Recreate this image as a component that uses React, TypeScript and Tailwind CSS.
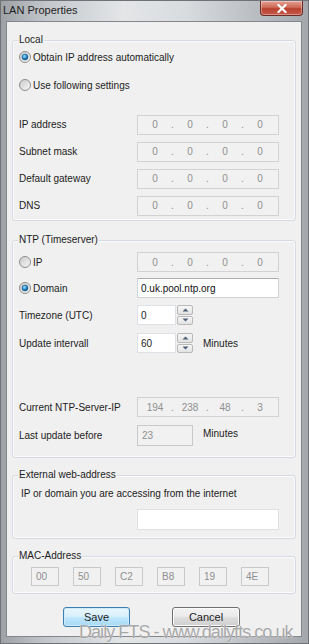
import React, { Fragment } from "react";

function Radio({ checked }: { checked?: boolean }) {
  return (
    <svg width="12" height="12" viewBox="0 0 12 12" className="shrink-0">
      <defs>
        <linearGradient id="rbg" x1="0" y1="0" x2="1" y2="1">
          <stop offset="0" stopColor="#c9c9c9" />
          <stop offset="1" stopColor="#f8f8f8" />
        </linearGradient>
        <radialGradient id="rdot" cx="0.4" cy="0.35" r="0.7">
          <stop offset="0" stopColor="#a6e4fa" />
          <stop offset="0.5" stopColor="#2b8fd0" />
          <stop offset="1" stopColor="#0c4b82" />
        </radialGradient>
      </defs>
      <circle cx="6" cy="6" r="5.5" fill="url(#rbg)" stroke="#8d8d8d" />
      {checked && <circle cx="6" cy="6" r="3" fill="url(#rdot)" stroke="#1b5686" strokeWidth="0.6" />}
    </svg>
  );
}

function IpBox({ parts }: { parts: string[] }) {
  return (
    <div className="w-[142px] h-[20px] border border-[#d2d2d2] bg-[#f1f1f1] flex items-center text-[#8f8f8f] pl-[2px]">
      {parts.map((p, i) => (
        <Fragment key={i}>
          <span className="w-[30px] text-center">{p}</span>
          {i < 3 && <span className="w-[5px] text-center">.</span>}
        </Fragment>
      ))}
    </div>
  );
}

function Group({ title, children, className }: { title: string; children: React.ReactNode; className?: string }) {
  return (
    <div className={"border border-[#d5dbe0] rounded-[3px] shadow-[inset_0_0_0_1px_#fbfbfb] " + (className ?? "")}>
      <div className="-mt-[7px] ml-[5px] px-[1px] w-fit bg-[#f0f0f0] h-[12px] leading-[12px]">{title}</div>
      {children}
    </div>
  );
}

function Spinner() {
  return (
    <div className="flex flex-col gap-[1px] ml-[1px]">
      {[0, 1].map((i) => (
        <div
          key={i}
          className="w-[16px] h-[9.5px] border border-[#b9b9b9] rounded-[2px] bg-[linear-gradient(#f7f7f7,#e2e2e2)] flex items-center justify-center"
        >
          <svg width="7" height="4" viewBox="0 0 7 4">
            {i === 0 ? <path d="M0.5 3.5 L3.5 0.5 L6.5 3.5 Z" fill="#4a5e78" /> : <path d="M0.5 0.5 L3.5 3.5 L6.5 0.5 Z" fill="#4a5e78" />}
          </svg>
        </div>
      ))}
    </div>
  );
}

export default function App() {
  return (
    <div className="relative w-[309px] h-[644px] overflow-hidden font-['Liberation_Sans',Arial,sans-serif] text-[10px] text-[#1c1c1c] bg-[linear-gradient(90deg,#9ea2a7_0%,#c4c8cc_15%,#e3e5e7_40%,#d9dcdf_60%,#b7bbbf_85%,#a4a8ac_100%)] border border-[#6f7378]">
      {/* title bar */}
      <div className="h-[20px] flex items-start justify-between">
        <div className="pl-[2px] pt-[3px] text-[11px] leading-[13px] text-[#1e1e1e]">LAN Properties</div>
        <div className="mr-[5px] w-[43px] h-[15px] rounded-b-[4px] border border-t-0 border-[#6e2a24] bg-[linear-gradient(#e4a294,#cf6a58_45%,#b8412f_55%,#c7594a)] flex items-center justify-center shadow-[inset_0_0_0_1px_rgba(255,255,255,0.35)]">
          <svg width="10" height="9" viewBox="0 0 10 9">
            <path d="M1.5 1 L8.5 8 M8.5 1 L1.5 8" stroke="#ffffff" strokeWidth="2.2" strokeLinecap="square" />
          </svg>
        </div>
      </div>

      {/* client area */}
      <div className="ml-[5px] w-[296px] h-[616px] border border-[#83878c] bg-[#f0f0f0] px-[5px] pt-[18px]">
        {/* Local */}
        <Group title="Local" className="pb-[4px]">
          <div className="mt-[3px] h-[16px] flex items-center gap-[2px] pl-[6px]">
            <Radio checked />
            <span>Obtain IP address automatically</span>
          </div>
          <div className="mt-[12px] h-[16px] flex items-center gap-[2px] pl-[6px]">
            <Radio />
            <span>Use following settings</span>
          </div>
          {[
            ["IP address", "mt-[21px]"],
            ["Subnet mask", "mt-[6px]"],
            ["Default gateway", "mt-[6px]"],
            ["DNS", "mt-[6px]"],
          ].map(([l, m]) => (
            <div key={l} className={"h-[21px] flex items-center pl-[6px] " + m}>
              <div className="w-[118px] shrink-0">{l}</div>
              <IpBox parts={["0", "0", "0", "0"]} />
            </div>
          ))}
        </Group>

        {/* NTP */}
        <Group title="NTP (Timeserver)" className="mt-[19px] pb-[11px]">
          <div className="mt-[6px] h-[20px] flex items-center pl-[6px]">
            <div className="w-[118px] shrink-0 flex items-center gap-[2px]">
              <Radio />
              <span>IP</span>
            </div>
            <IpBox parts={["0", "0", "0", "0"]} />
          </div>
          <div className="mt-[6px] h-[20px] flex items-center pl-[6px]">
            <div className="w-[118px] shrink-0 flex items-center gap-[2px]">
              <Radio checked />
              <span>Domain</span>
            </div>
            <div className="w-[142px] h-[20px] border border-[#cfd4d9] border-t-[#abadb3] bg-white flex items-center pl-[3px] text-[#111]">
              0.uk.pool.ntp.org
            </div>
          </div>
          <div className="mt-[7px] h-[20px] flex items-center pl-[6px]">
            <div className="w-[118px] shrink-0">Timezone (UTC)</div>
            <div className="w-[39px] h-[20px] border border-[#dde1e5] bg-white flex items-center pl-[3px]">0</div>
            <Spinner />
          </div>
          <div className="mt-[8px] h-[20px] flex items-center pl-[6px]">
            <div className="w-[118px] shrink-0">Update intervall</div>
            <div className="w-[39px] h-[20px] border border-[#dde1e5] bg-white flex items-center pl-[3px]">60</div>
            <Spinner />
            <span className="ml-[10px]">Minutes</span>
          </div>
          <div className="mt-[44px] h-[20px] flex items-center pl-[6px]">
            <div className="w-[118px] shrink-0">Current NTP-Server-IP</div>
            <IpBox parts={["194", "238", "48", "3"]} />
          </div>
          <div className="mt-[8px] h-[21px] flex items-center pl-[6px]">
            <div className="w-[118px] shrink-0">Last update before</div>
            <div className="w-[56px] h-[21px] border border-[#c9c9c9] bg-[#f1f1f1] text-[#8f8f8f] pl-[4px] pt-[2px]">23</div>
            <span className="ml-[10px] -mt-[4px]">Minutes</span>
          </div>
        </Group>

        {/* External */}
        <Group title="External web-address" className="mt-[17px] pb-[8px]">
          <div className="mt-[7px] h-[12px] leading-[12px] pl-[8px]">IP or domain you are accessing from the internet</div>
          <div className="mt-[9px] pl-[124px]">
            <div className="w-[142px] h-[21px] border border-[#dde1e5] bg-white" />
          </div>
        </Group>

        {/* MAC */}
        <Group title="MAC-Address" className="mt-[17px] pb-[7px]">
          <div className="mt-[5px] flex gap-[14px] pl-[18px]">
            {["00", "50", "C2", "B8", "19", "4E"].map((m) => (
              <div key={m} className="w-[28px] h-[19px] border border-[#c9c9c9] bg-[#f1f1f1] text-[#8f8f8f] pl-[4px] flex items-center">
                {m}
              </div>
            ))}
          </div>
        </Group>

        {/* buttons */}
        <div className="mt-[13px] flex pl-[51px] gap-[42px]">
          <div className="w-[67px] h-[20px] rounded-[3px] border border-[#3c7fb1] bg-[linear-gradient(#eaf6fd,#d9f0fc_45%,#bee6fd_55%,#a7d9f5)] shadow-[inset_0_0_0_1px_#cfeafa] flex items-center justify-center text-[11px]">
            Save
          </div>
          <div className="w-[68px] h-[20px] rounded-[3px] border border-[#707070] bg-[linear-gradient(#f2f2f2,#ebebeb_45%,#dddddd_55%,#cfcfcf)] shadow-[inset_0_0_0_1px_#fcfcfc] flex items-center justify-center text-[11px]">
            Cancel
          </div>
        </div>
      </div>

      {/* watermark */}
      <div className="absolute left-[78px] top-[621px] text-[18px] leading-[20px] tracking-[-0.95px] text-[#a8a8a8] whitespace-nowrap [text-shadow:0_0_1px_#ffffff]">
        Daily FTS - www.dailyfts.co.uk
      </div>
    </div>
  );
}
